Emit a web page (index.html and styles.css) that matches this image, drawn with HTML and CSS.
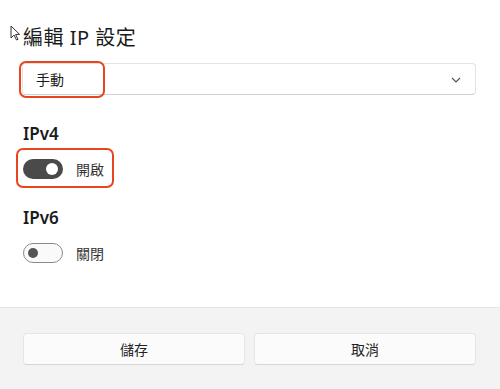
FILE: index.html
```html
<!DOCTYPE html>
<html>
  <head>
    <title>編輯 IP 設定</title>
    <link rel="stylesheet" href="styles.css">
  </head>
  <body>
    <div class="dialog">
      <div class="content">
        <svg class="cursor" width="11" height="16" viewBox="0 0 11 16">
          <path d="M1 1 L1 13 L4 10 L6.5 15 L8 14.3 L5.6 9.4 L9.6 9.4 Z" fill="#fff" stroke="#333" stroke-width="1" stroke-linejoin="round"/>
        </svg>
        <h1 class="title">編輯 IP 設定</h1>
        <div class="select">
          <span class="select-value">手動</span>
          <svg class="chevron" width="10" height="6" viewBox="0 0 10 6">
            <path d="M1 1 L5 5 L9 1" fill="none" stroke="#555" stroke-width="1.2"/>
          </svg>
          <span class="mark mark-select"></span>
        </div>

        <h2 class="section">IPv4</h2>
        <div class="toggle-row">
          <span class="toggle on"><span class="knob"></span></span>
          <span class="toggle-label">開啟</span>
          <span class="mark mark-toggle"></span>
        </div>

        <h2 class="section">IPv6</h2>
        <div class="toggle-row">
          <span class="toggle off"><span class="knob"></span></span>
          <span class="toggle-label">關閉</span>
        </div>
      </div>
      <div class="footer">
        <button class="btn">儲存</button>
        <button class="btn">取消</button>
      </div>
    </div>
  </body>
</html>
```

FILE: styles.css
```css
body {
  margin: 0;
  padding: 0;
  font-family: "Segoe UI", "Noto Sans", "Noto Sans CJK TC", sans-serif;
  color: #1b1b1b;
  background-color: #ffffff;
}
.dialog {
  width: 500px;
  height: 389px;
  display: flex;
  flex-direction: column;
  overflow: hidden;
}
.content {
  position: relative;
  flex: 1;
  padding: 24px 24px 0 23px;
  box-sizing: border-box;
}
.cursor {
  position: absolute;
  left: 10px;
  top: 25px;
}
.title {
  font-size: 20px;
  font-weight: 400;
  margin: 0 0 11px 0;
  line-height: 28px;
  letter-spacing: 0.5px;
}
.select {
  position: relative;
  height: 32px;
  margin-left: -1px;
  border: 1px solid #e3e3e3;
  border-bottom-color: #d0d0d0;
  border-radius: 4px;
  display: flex;
  align-items: center;
  justify-content: space-between;
  padding: 0 14px 0 13px;
  box-sizing: border-box;
  font-size: 14px;
}
.chevron {
  margin-top: 2px;
}
.mark {
  position: absolute;
  border: 2.5px solid #e8451f;
  border-radius: 7px;
  box-sizing: border-box;
}
.mark-select {
  left: -4px;
  top: -3px;
  width: 86px;
  height: 37px;
}
.section {
  font-size: 17px;
  font-weight: 600;
  margin: 27px 0 13px 0;
  line-height: 24px;
}
.toggle-row {
  position: relative;
  display: flex;
  align-items: center;
  gap: 13px;
  height: 20px;
  font-size: 14px;
  color: #333;
}
.toggle {
  width: 40px;
  height: 20px;
  border-radius: 10px;
  box-sizing: border-box;
  position: relative;
  display: inline-block;
}
.toggle.on {
  background-color: #4a4a4a;
}
.toggle.on .knob {
  position: absolute;
  right: 5px;
  top: 4px;
  width: 12px;
  height: 12px;
  border-radius: 50%;
  background-color: #fff;
}
.toggle.off {
  border: 1px solid #8a8a8a;
  background-color: #fafafa;
}
.toggle.off .knob {
  position: absolute;
  left: 4px;
  top: 4px;
  width: 10px;
  height: 10px;
  border-radius: 50%;
  background-color: #555;
}
.mark-toggle {
  left: -7px;
  top: -11px;
  width: 98px;
  height: 40px;
}
.footer {
  height: 82px;
  background-color: #f3f3f3;
  border-top: 1px solid #e6e6e6;
  box-sizing: border-box;
  display: flex;
  gap: 9px;
  padding: 25px 24px 0 23px;
}
.btn {
  flex: 1;
  height: 32px;
  background-color: #fbfbfb;
  border: 1px solid #e6e6e6;
  border-bottom-color: #d6d6d6;
  border-radius: 4px;
  font-family: "Segoe UI", "Noto Sans", "Noto Sans CJK TC", sans-serif;
  font-size: 14px;
  color: #222;
}
```
